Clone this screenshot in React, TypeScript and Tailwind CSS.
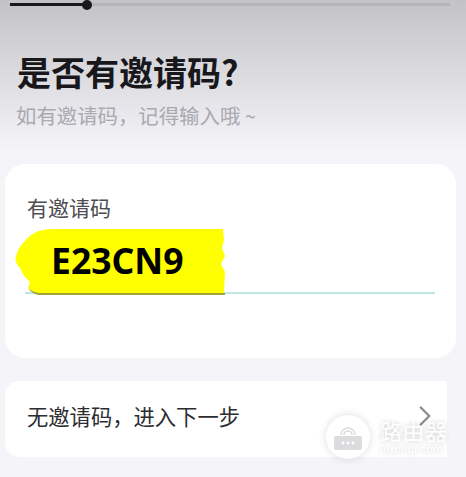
import React from 'react'
import { ChevronRight } from 'lucide-react'

const cjk = '"Noto Sans CJK SC", "Noto Sans", sans-serif'

function Watermark() {
  return (
    <div className="absolute left-[326px] top-[415px] flex items-center gap-[10px] text-white">
      <div className="w-[44px] h-[44px] rounded-full bg-white flex items-center justify-center shadow-[0_0_8px_rgba(0,0,0,0.14)]">
        <svg width="30" height="28" viewBox="0 0 30 28" fill="none">
          <path d="M8 12a7 7 0 0 1 14 0" stroke="#dcdcdf" strokeWidth="1.6" />
          <path d="M11 12a4 4 0 0 1 8 0" stroke="#dcdcdf" strokeWidth="1.6" />
          <rect x="1" y="13" width="28" height="14" rx="2" fill="#dcdcdf" />
          <circle cx="10" cy="20" r="1.4" fill="#fff" />
          <circle cx="15" cy="20" r="1.4" fill="#fff" />
          <circle cx="20" cy="20" r="1.4" fill="#fff" />
        </svg>
      </div>
      <div className="flex flex-col items-start [text-shadow:0_0_5px_rgba(0,0,0,0.22)]">
        <span className="text-[22px] leading-[25px] tracking-[0.5px]">路由器</span>
        <span className="text-[11px] leading-[13px] tracking-[0.3px]" style={{ fontFamily: 'Roboto, sans-serif' }}>luyouqi.com</span>
      </div>
    </div>
  )
}

export default function App() {
  return (
    <div
      className="relative w-[466px] h-[477px] overflow-hidden bg-[#f4f4f9] text-[#17171c]"
      style={{ fontFamily: cjk }}
    >
      <div className="h-[150px] bg-gradient-to-b from-[#c3c2c7] to-[#f4f4f9] pt-[3px] pl-[10px] pr-[16px]">
        <div className="relative h-[3px] bg-[#b5b4b9]">
          <div className="absolute left-0 top-0 h-[3px] w-[77px] bg-[#17171c]" />
          <div className="absolute left-[72px] top-[-3px] w-[10px] h-[10px] rounded-full bg-[#17171c]" />
        </div>
        <h1 className="mt-[44px] ml-[7px] text-[34px] leading-[44px] font-bold whitespace-nowrap">是否有邀请码?</h1>
        <p className="mt-[7px] ml-[6px] text-[20.4px] leading-[28px] text-[#a9a9ae] whitespace-nowrap">如有邀请码，记得输入哦 ~</p>
      </div>

      <div className="mt-[14px] ml-[5px] w-[451px] h-[194px] rounded-[20px] bg-white px-[20px] pt-[28px]">
        <div className="ml-[2px] text-[21px] leading-[30px] text-[#4d4d52]">有邀请码</div>
        <div className="relative mt-[6px] w-[410px] h-[66px] border-b-2 border-[#bde9e2]">
          <svg className="absolute left-[-10px] top-0" width="212" height="67" viewBox="0 0 212 67">
            <path
              d="M24 3 Q30 1 40 1 H208 L209 12 L207 20 L210 28 L206 36 L210 44 L209 66 H24 Q17 64 13 60 L15 54 Q8 48 5 40 Q-1 34 1 28 Q3 20 9 14 Q15 6 24 3 Z"
              fill="#ffff00"
            />
            <path d="M13 60 Q17 64 24 65 H210 V67 H24 Q17 66 13 60 Z" fill="#a3a33c" />
          </svg>
          <span
            className="absolute left-[26px] top-[9px] text-[35.5px] leading-[46px] font-bold text-black"
            style={{ fontFamily: '"Noto Sans", sans-serif' }}
          >
            E23CN9
          </span>
        </div>
      </div>

      <div className="mt-[23px] ml-[5px] w-[442px] h-[76px] bg-white rounded-l-[14px] flex items-center justify-between pl-[22px] pr-[5px]">
        <span className="text-[21.3px] leading-[30px] mb-[6px] text-[#2c2c31]">无邀请码，进入下一步</span>
        <ChevronRight className="w-[34px] h-[34px] mb-[6px] text-[#8d8d90]" strokeWidth={1.7} />
      </div>

      <Watermark />
    </div>
  )
}
